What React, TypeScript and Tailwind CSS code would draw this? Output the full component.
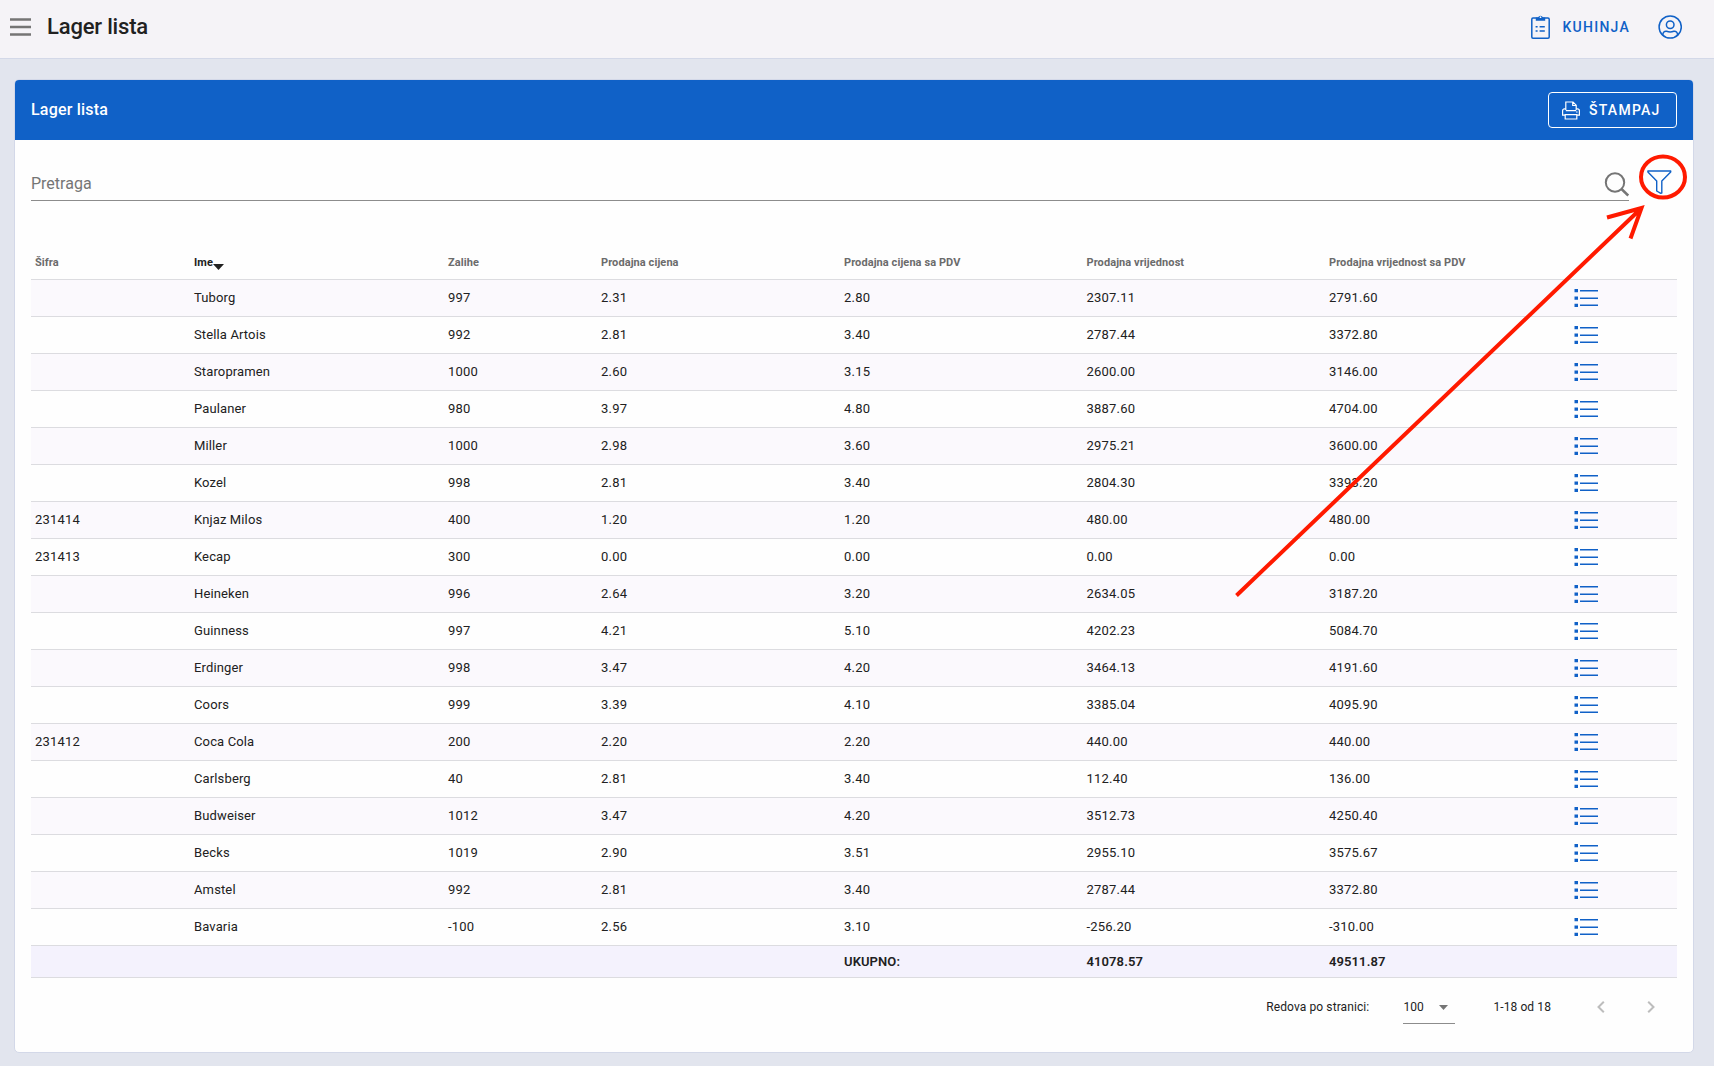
import React, { useState } from "react";

type Item = {
  code: string;
  name: string;
  stock: string;
  price: string;
  priceVat: string;
  value: string;
  valueVat: string;
};

function item(code: string, name: string, stock: string, price: string, priceVat: string, value: string, valueVat: string): Item {
  return { code, name, stock, price, priceVat, value, valueVat };
}

const ITEMS: Item[] = [
  item("", "Tuborg", "997", "2.31", "2.80", "2307.11", "2791.60"),
  item("", "Stella Artois", "992", "2.81", "3.40", "2787.44", "3372.80"),
  item("", "Staropramen", "1000", "2.60", "3.15", "2600.00", "3146.00"),
  item("", "Paulaner", "980", "3.97", "4.80", "3887.60", "4704.00"),
  item("", "Miller", "1000", "2.98", "3.60", "2975.21", "3600.00"),
  item("", "Kozel", "998", "2.81", "3.40", "2804.30", "3393.20"),
  item("231414", "Knjaz Milos", "400", "1.20", "1.20", "480.00", "480.00"),
  item("231413", "Kecap", "300", "0.00", "0.00", "0.00", "0.00"),
  item("", "Heineken", "996", "2.64", "3.20", "2634.05", "3187.20"),
  item("", "Guinness", "997", "4.21", "5.10", "4202.23", "5084.70"),
  item("", "Erdinger", "998", "3.47", "4.20", "3464.13", "4191.60"),
  item("", "Coors", "999", "3.39", "4.10", "3385.04", "4095.90"),
  item("231412", "Coca Cola", "200", "2.20", "2.20", "440.00", "440.00"),
  item("", "Carlsberg", "40", "2.81", "3.40", "112.40", "136.00"),
  item("", "Budweiser", "1012", "3.47", "4.20", "3512.73", "4250.40"),
  item("", "Becks", "1019", "2.90", "3.51", "2955.10", "3575.67"),
  item("", "Amstel", "992", "2.81", "3.40", "2787.44", "3372.80"),
  item("", "Bavaria", "-100", "2.56", "3.10", "-256.20", "-310.00"),
];

const ROW = "grid grid-cols-[159px_254px_153px_243px_242.5px_242.5px_245px_1fr] items-center border-b border-[#dcdce0] [&>*]:pl-1";

function MenuIcon() {
  return (
    <svg width="22" height="20" viewBox="0 0 22 20" stroke="#757575" strokeWidth="2.3">
      <path d="M0 2.5h21M0 10h21M0 17.5h21" />
    </svg>
  );
}

function ClipboardIcon() {
  return (
    <svg width="20" height="26" viewBox="0 0 20 26" fill="none" stroke="#1061c7" strokeWidth="1.5">
      <rect x="0.8" y="4" width="17.4" height="20.300" rx="1.200" />
      <path d="M4.800 3.500h2.300a2.500 2.500 0 0 1 4.800 0h2.300v3.300H4.800z" fill="#1061c7" stroke="none" />
      <circle cx="9.500" cy="3.200" r="0.900" fill="#f5f3f7" stroke="none" />
      <path d="M4.600 12.800h2M8.600 12.800h5.200M4.600 17h2M8.600 17h5.200" strokeWidth="1.600" />
    </svg>
  );
}

function UserIcon() {
  return (
    <svg width="24" height="24" viewBox="0 0 24 24" fill="none" stroke="#1061c7" strokeWidth="1.5">
      <circle cx="12.200" cy="12" r="11.100" />
      <circle cx="12.200" cy="9.800" r="3.800" />
      <path d="M4.800 20.200c0-3.100 1.600-4.200 3.800-3.900 1.300.5 2.300.7 3.600.7s2.300-.2 3.600-.7c2.200-.3 3.800.8 3.800 3.900" />
    </svg>
  );
}

function PrinterIcon() {
  return (
    <svg width="18" height="19" viewBox="0 0 18 19" fill="none" stroke="#fff" strokeWidth="1.2">
      <path d="M3.800 9V1h7.200l3.200 3.200V9M10.700 1v3.500h3.500" />
      <path d="M3 14.200H.6V9.800q0-2 2-2h1.200M14.200 7.800h1.200q2 0 2 2v4.400H15" />
      <path d="M3.800 9.700h10.400M3.200 13.700h11.600V18H3.200z" />
      <path d="M14 11h1.600" />
    </svg>
  );
}

function SearchIcon() {
  return (
    <svg className="mt-[7px]" width="25" height="25" viewBox="0 0 25 25" fill="none" stroke="#757575" strokeWidth="2">
      <circle cx="11" cy="10.500" r="9.200" />
      <path d="M17.500 17l6.700 6.500" strokeWidth="2.500" />
    </svg>
  );
}

function FilterIcon() {
  return (
    <svg width="25" height="25" viewBox="0 0 25 25" fill="none" stroke="#1061c7" strokeWidth="1.400" strokeLinejoin="round">
      <path d="M.9 1h22.800v1L14.800 11v12l-1.400.2-3.700-2.200v-10L.9 2z" />
    </svg>
  );
}

function ListIcon() {
  return (
    <svg width="25" height="20" viewBox="0 0 25 20" fill="#1061c7">
      <path d="M.5 1h3.500v3.200H.5zM.5 8.500H4v3.200H.5zM.5 15.800H4V19H.5z" />
      <path d="M6 1.900h18v1.500H6zM6 9.400h18v1.500H6zM6 16.600h18v1.500H6z" />
    </svg>
  );
}

function Chevron({ d }: { d: string }) {
  return (
    <svg width="8" height="12" viewBox="0 0 8 12" fill="none" stroke="#bdbdbd" strokeWidth="2">
      <path d={d} />
    </svg>
  );
}

// Hand-drawn style pointer towards the filter button
function FilterHint() {
  return (
    <svg className="absolute left-0 top-0 pointer-events-none" width="1714" height="1066" fill="none" stroke="#ff1a00" strokeWidth="4">
      <ellipse cx="1663" cy="177" rx="22" ry="20.500" />
      <path d="M1236.500 595.500L1641 208.500M1607 217.500L1641.500 208L1630.500 238.500" />
    </svg>
  );
}

export default function App() {
  const [search, setSearch] = useState("");
  const rows = ITEMS.filter((r) => r.name.toLowerCase().includes(search.toLowerCase()));

  return (
    <div className="relative h-[1066px] w-[1714px] overflow-hidden bg-[#e2e5ee] text-[#212121] font-[Roboto,sans-serif]">
      <header className="flex h-[59px] items-center border-b border-[#d3d8e8] bg-[#f5f3f7] pl-2.5 pr-8 pb-1">
        <button aria-label="Meni"><MenuIcon /></button>
        <h1 className="ml-[15px] text-[22px] font-medium leading-7 tracking-[-0.18px]">Lager lista</h1>
        <button className="ml-auto flex items-center text-[#1061c7]">
          <ClipboardIcon />
          <span className="ml-3 text-sm font-medium tracking-[1.25px]">KUHINJA</span>
        </button>
        <button className="ml-7" aria-label="Profil"><UserIcon /></button>
      </header>

      <main className="ml-3.5 mt-5 h-[974px] w-[1680px] overflow-hidden rounded-[5px] border border-[#d3d8e8] bg-[#fefefe]">
        <div className="flex h-[60px] items-center justify-between bg-[#1061c7] pl-4 pr-4 text-white">
          <h2 className="text-base font-medium tracking-[0.2px]">Lager lista</h2>
          <button className="flex h-9 w-[129px] items-center rounded border border-white pl-[13px]">
            <PrinterIcon />
            <span className="ml-[9px] text-sm font-medium tracking-[1.25px]">ŠTAMPAJ</span>
          </button>
        </div>

        <div className="px-4">
          <div className="flex h-[61px] items-end">
            <label className="flex h-10 w-[1598px] items-center border-b border-[#8c8c8c]">
              <input
                value={search}
                onChange={(e) => setSearch(e.target.value)}
                placeholder="Pretraga"
                className="mt-1.5 flex-1 text-base outline-none placeholder:text-[#757575]"
              />
              <SearchIcon />
            </label>
            <button className="mb-1.5 ml-[18px]" aria-label="Filter"><FilterIcon /></button>
          </div>

          <div className="mt-[42px] w-[1646px] text-[13px] tracking-[0.2px]">
            <div className={`${ROW} h-[37px] pt-[5px] text-[11px] font-bold tracking-[0.08px] text-[#6b6b6b]`}>
              <span>Šifra</span>
              <span className="flex items-center text-[#212121]">
                Ime
                <svg className="mt-[7px]" width="11" height="6" fill="currentColor"><path d="M0 0h11L5.500 6z" /></svg>
              </span>
              <span>Zalihe</span>
              <span>Prodajna cijena</span>
              <span>Prodajna cijena sa PDV</span>
              <span>Prodajna vrijednost</span>
              <span>Prodajna vrijednost sa PDV</span>
            </div>
            {rows.map((r) => (
              <div key={r.name} className={`${ROW} h-[37px] odd:bg-[#fefefe] even:bg-[#fbf9fd]`}>
                <span>{r.code}</span>
                <span className="tracking-[0.13px]">{r.name}</span>
                <span>{r.stock}</span>
                <span>{r.price}</span>
                <span>{r.priceVat}</span>
                <span>{r.value}</span>
                <span>{r.valueVat}</span>
                <button className="justify-self-start" aria-label="Detalji"><ListIcon /></button>
              </div>
            ))}
            <div className={`${ROW} h-8 bg-[#f4f2fd] font-semibold tracking-[0.1px]`}>
              <span className="col-start-5">UKUPNO:</span>
              <span>41078.57</span>
              <span>49511.87</span>
            </div>
          </div>

          <div className="flex h-[58px] items-center justify-end text-xs">
            <span className="tracking-[0.1px]">Redova po stranici:</span>
            <button className="ml-[34px] mt-[1px] flex h-[33px] w-[52px] items-center justify-between border-b border-[#8c8c8c] pr-[7px]">
              100
              <svg width="9" height="5" fill="#757575"><path d="M0 0h9L4.500 5z" /></svg>
            </button>
            <span className="ml-[38px] tracking-[0.1px]">1-18 od 18</span>
            <button className="ml-[46px]" aria-label="Prethodna"><Chevron d="M6.800.7L1.500 6l5.300 5.300" /></button>
            <button className="ml-[42px] mr-[22px]" aria-label="Sljedeća"><Chevron d="M1.200.7L6.500 6l-5.300 5.300" /></button>
          </div>
        </div>
      </main>
      <FilterHint />
    </div>
  );
}
